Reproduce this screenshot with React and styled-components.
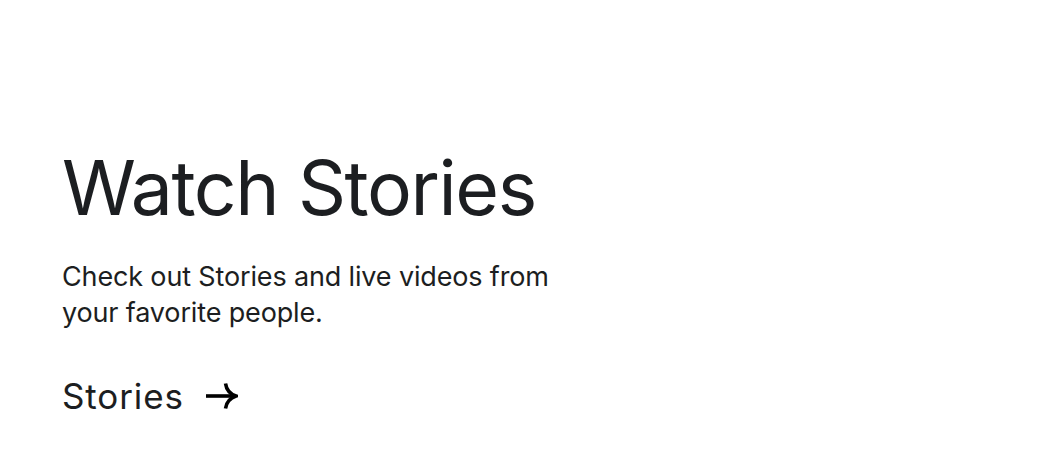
import styled, { createGlobalStyle } from "styled-components";

const GlobalStyle = createGlobalStyle`
  html, body {
    margin: 0;
    padding: 0;
    background: #ffffff;
  }
  body {
    font-family: Inter, "Noto Sans", sans-serif;
    color: #1c1e21;
  }
`;

const Page = styled.main`
  width: 1038px;
  height: 475px;
  box-sizing: border-box;
  padding: 143px 0 0 62px;
  display: flex;
  flex-direction: column;
  align-items: flex-start;
`;

const Title = styled.h1`
  margin: 0;
  font-size: 75px;
  font-weight: 400;
  line-height: 90px;
  letter-spacing: -1.4px;
  color: #1c1e21;
`;

const Lead = styled.p`
  margin: 26px 0 0;
  width: 520px;
  font-size: 27px;
  line-height: 36px;
  font-weight: 400;
  letter-spacing: -0.15px;
  color: #1c1e21;
`;

const CtaLink = styled.a`
  margin-top: 43px;
  display: flex;
  align-items: center;
  gap: 22px;
  font-size: 35px;
  line-height: 44px;
  letter-spacing: 0.9px;
  color: #1c1e21;
  text-decoration: none;
  cursor: pointer;
`;

const Arrow = () => (
  <svg width="32" height="28" viewBox="0 0 32 28" fill="none">
    <path d="M0 14h29" stroke="#000" strokeWidth="3.6" />
    <path
      d="M19.5 1.5C20.5 8.5 24 12 30 14C24 16 20.5 19.5 19.5 26.5"
      stroke="#000"
      strokeWidth="3.6"
    />
  </svg>
);

export default function App() {
  return (
    <>
      <GlobalStyle />
      <Page>
        <Title>Watch Stories</Title>
        <Lead>Check out Stories and live videos from your favorite people.</Lead>
        <CtaLink href="#stories">
          Stories
          <Arrow />
        </CtaLink>
      </Page>
    </>
  );
}
